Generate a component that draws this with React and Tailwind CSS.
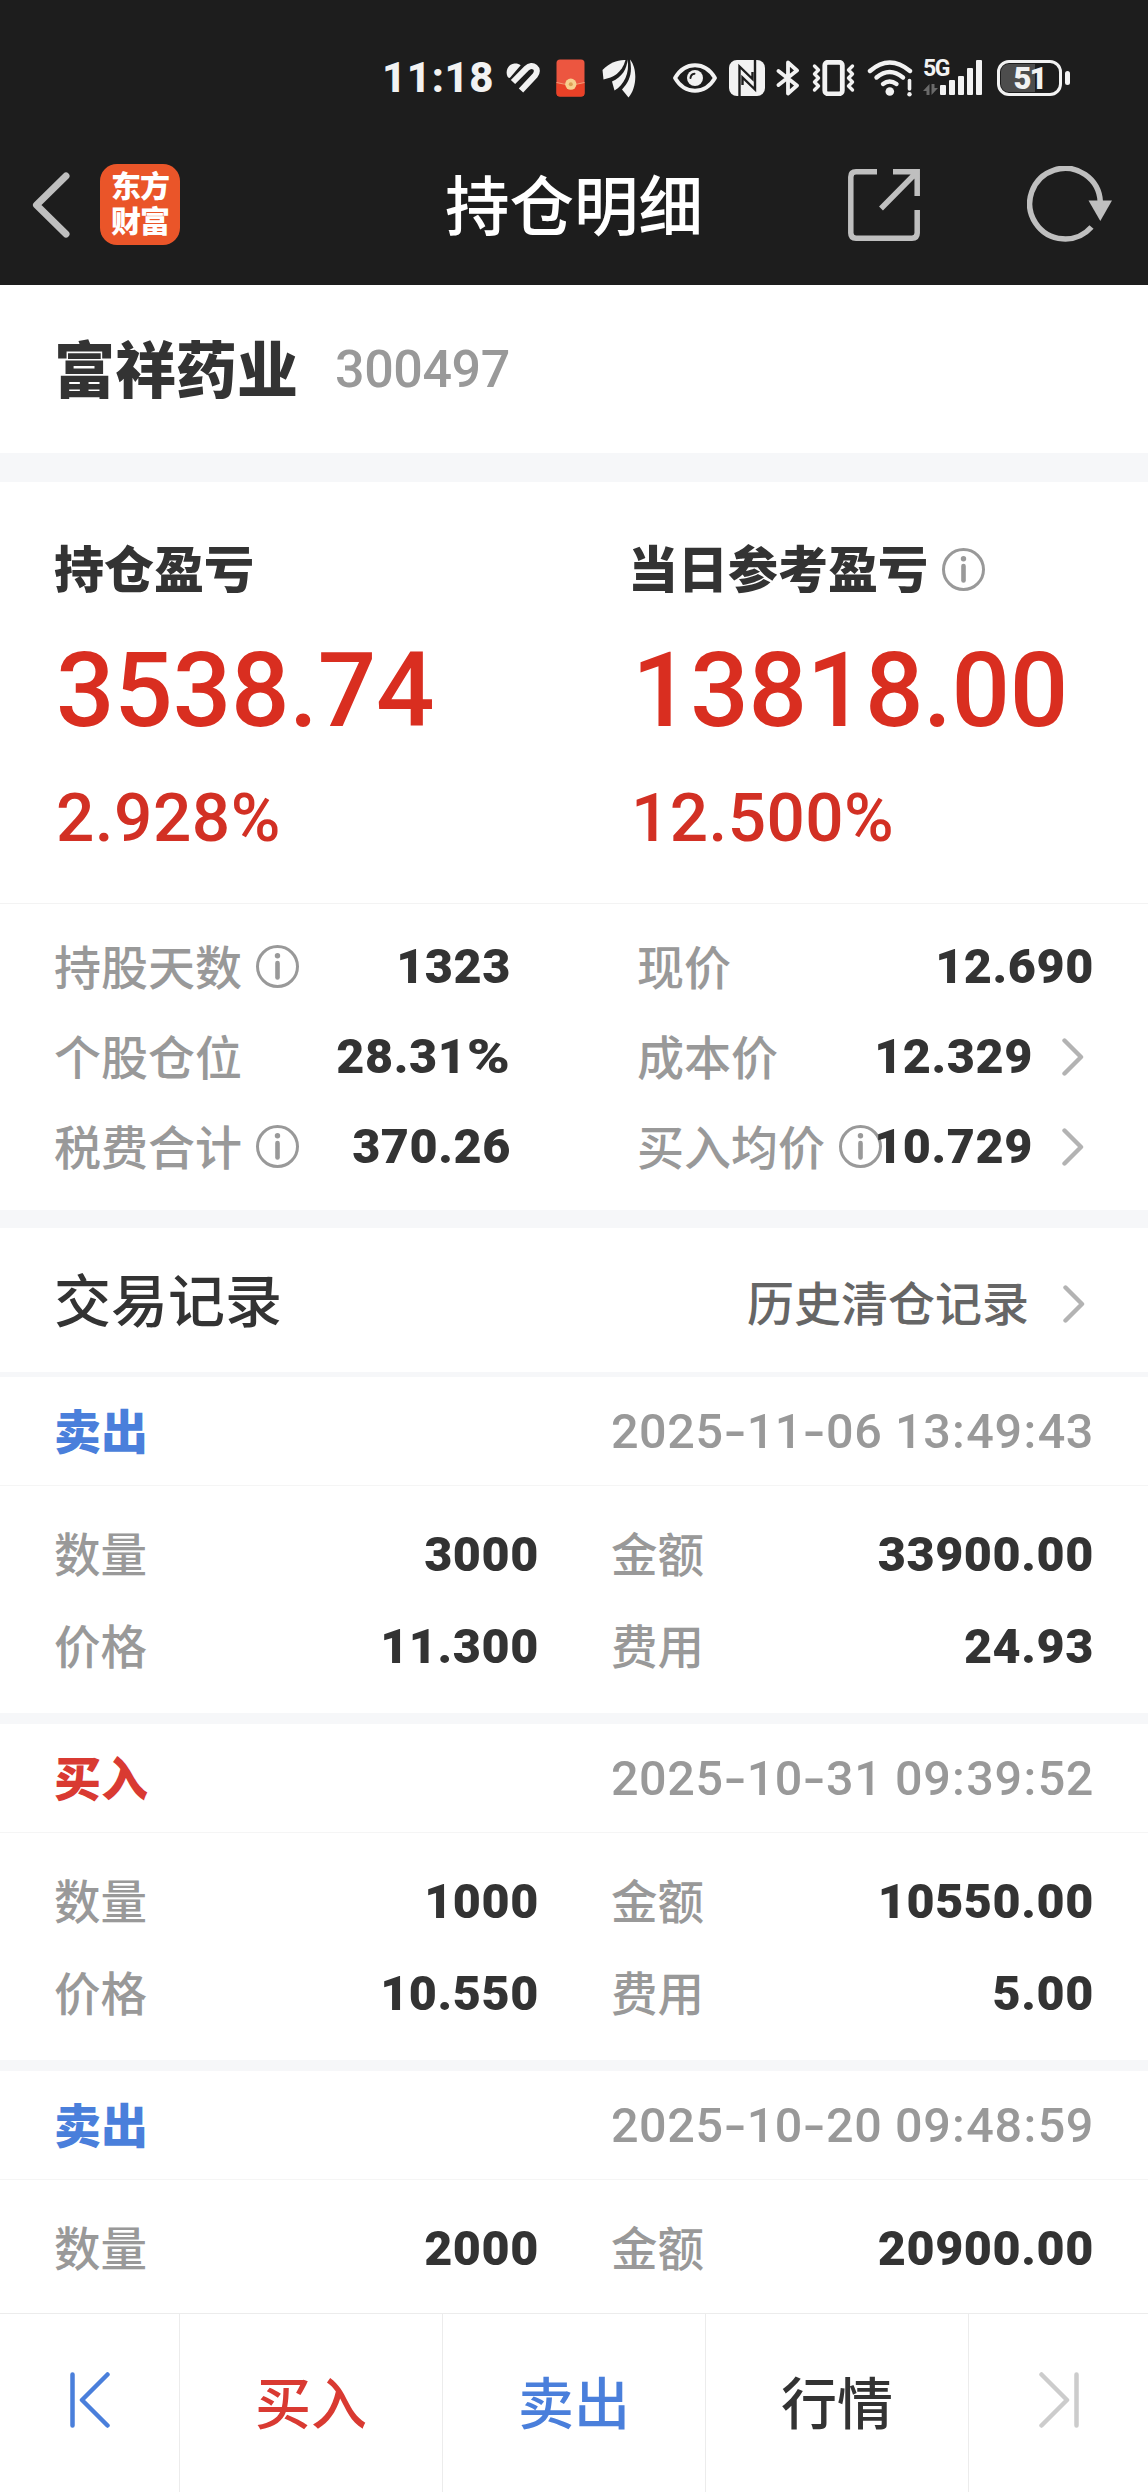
const CJK = "font-['Noto_Sans_CJK_SC',sans-serif]"
const NUM = "font-['Roboto','Noto_Sans_CJK_SC',sans-serif]"

const STATS = [
  [
    { label: '持股天数', value: '1323', info: true },
    { label: '个股仓位', value: '28.31', unit: '%' },
    { label: '税费合计', value: '370.26', info: true },
  ],
  [
    { label: '现价', value: '12.690' },
    { label: '成本价', value: '12.329', link: true },
    { label: '买入均价', value: '10.729', info: true, link: true },
  ],
]

const RECORDS = [
  { side: '卖出', date: '2025-11-06', time: '13:49:43', qty: '3000', amount: '33900.00', price: '11.300', fee: '24.93' },
  { side: '买入', date: '2025-10-31', time: '09:39:52', qty: '1000', amount: '10550.00', price: '10.550', fee: '5.00' },
  { side: '卖出', date: '2025-10-20', time: '09:48:59', qty: '2000', amount: '20900.00' },
]

const SIDE_COLORS = {
  '卖出': 'text-[#4a7fdb]',
  '买入': 'text-[#d93a32]',
}

function InfoIcon({ className }) {
  return (
    <svg className={`h-[43px] w-[43px] shrink-0 ${className}`} viewBox="0 0 43 43" fill="none" stroke="#999" strokeLinecap="round">
      <circle cx="21.5" cy="21.5" r="20" strokeWidth="3" />
      <path d="M21.5 18v14.5" strokeWidth="4.6" />
      <circle cx="21.5" cy="10.8" r="2.7" fill="#999" stroke="none" />
    </svg>
  )
}

function ChevronIcon({ className }) {
  return (
    <svg className={`h-[38px] w-[22px] shrink-0 ${className}`} viewBox="0 0 22 38" fill="none" stroke="#b3b3b3" strokeWidth="4.4" strokeLinecap="round" strokeLinejoin="round">
      <path d="M2.5 2.5 19 19 2.5 35.5" />
    </svg>
  )
}

function StatusBar() {
  return (
    <div className={`flex h-[156px] items-center pl-[382px] text-[#f2f2f2] ${NUM}`}>
      <span className="w-[124px] text-[42px] leading-none font-extrabold tracking-[.6px]">11:18</span>
      {/* 健康 */}
      <svg className="h-[30px] w-[34px]" viewBox="0 0 34 30" fill="#f2f2f2">
        <path d="M1.5 13.5C-1 8 2 1 8.5 .5 11 .3 13 1 14.7 2.2L4.2 14.5C3.4 15.5 2.1 14.8 1.5 13.5Z" />
        <path d="M7 19 20.5 5.3C26.5-.5 34.5 6 29 12.5L15 27.5" fill="none" stroke="#f2f2f2" strokeWidth="6" />
      </svg>
      {/* 红包 */}
      <svg className="ml-4 h-[38px] w-[29px]" viewBox="0 0 29 38">
        <rect x=".5" y=".5" width="28" height="37" rx="3.5" fill="#ec5640" />
        <path d="M.5 23.5Q14.5 27 28.5 23.5V34q0 3.5-3.5 3.5H4Q.5 37.5.5 34Z" fill="#ea4127" />
        <path d="M.5 23.5Q14.5 27.5 28.5 23.5" fill="none" stroke="#f3a07c" strokeWidth="1" />
        <circle cx="14.8" cy="25.2" r="5.6" fill="#f7cf8e" />
        <circle cx="14.8" cy="25.2" r="2" fill="#dc9f55" />
      </svg>
      {/* 羽毛 */}
      <svg className="ml-[17px] h-[39px] w-[34px]" viewBox="0 0 34 39" fill="#f2f2f2">
        <path d="M23.5 1C16 .5 7 4 .5 11L1.5 20.5C11 18.5 20 14 23.5 1Z" />
        <path d="M25.5 .5C25 10 20 18 10 22.5L12.5 31.5C22 26 28 14 25.5 .5Z" />
        <path d="M28 .5C30.5 14 28 22 20 30.5L26.5 38.5C34.5 30 36 10 28 .5Z" />
      </svg>
      {/* 护眼 */}
      <svg className="ml-[37px] h-[30px] w-[44px]" viewBox="0 0 44 30">
        <path d="M2 15C12-2 32-2 42 15 32 32 12 32 2 15Z" fill="none" stroke="#f2f2f2" strokeWidth="3.8" strokeLinejoin="round" />
        <circle cx="22" cy="15" r="8" fill="#f2f2f2" />
        <path d="M17.5 15q.3-3.8 4-4.3" fill="none" stroke="#1d1d1d" strokeWidth="2" strokeLinecap="round" />
      </svg>
      {/* NFC */}
      <svg className="ml-3 h-[36px] w-[36px]" viewBox="0 0 36 36">
        <rect width="36" height="36" rx="8" fill="#f2f2f2" />
        <path d="M10.5 36V6.5L23.5 19V12" fill="none" stroke="#1d1d1d" strokeWidth="2.4" />
        <path d="M26 0V29.5L13.5 17.5V25" fill="none" stroke="#1d1d1d" strokeWidth="2.4" />
      </svg>
      {/* 蓝牙 */}
      <svg className="ml-[11px] h-[36px] w-[24px]" viewBox="0 0 24 36" fill="none" stroke="#f2f2f2" strokeWidth="3.8" strokeLinejoin="round" strokeLinecap="round">
        <path d="M2.5 11 21 25.5 12 33.5V2.5L21 10.5 2.5 25" />
      </svg>
      {/* 振动 */}
      <svg className="ml-3 h-[36px] w-[43px]" viewBox="0 0 43 36" fill="none" stroke="#f2f2f2" strokeWidth="3.4" strokeLinecap="round" strokeLinejoin="round">
        <rect x="12.8" y="2.3" width="17.5" height="31.5" rx="3" strokeWidth="4.8" />
        <path d="M2.5 6 6.5 10 2.5 14 6.5 18 2.5 22 6.5 26 2.5 30" />
        <path d="M40.5 6 36.5 10 40.5 14 36.5 18 40.5 22 36.5 26 40.5 30" />
      </svg>
      {/* WiFi */}
      <svg className="ml-3 h-[37px] w-[46px]" viewBox="0 0 46 37" fill="none" stroke="#f2f2f2" strokeWidth="4.4" strokeLinecap="round">
        <path d="M3 11Q22.5-6 43 11" />
        <path d="M9.5 17.5Q22.5 6.5 36 17.5" />
        <path d="M16 24Q22.5 19 29.5 24" />
        <circle cx="22.8" cy="31.5" r="4.3" fill="#f2f2f2" stroke="none" />
        <path d="M42.5 20.5v8.5" strokeWidth="3.6" />
        <circle cx="42.5" cy="34.3" r="2.2" fill="#f2f2f2" stroke="none" />
      </svg>
      {/* 5G 信号 */}
      <div className="ml-[10px] flex h-[36px] items-end">
        <div className="flex h-[36px] w-[17px] flex-col justify-between">
          <span className="w-6 text-[23px] leading-[17px] font-bold tracking-[-1.5px]">5G</span>
          <svg className="mb-px h-[11px] w-[15px]" viewBox="0 0 15 11" fill="#6a6a6a">
            <path d="M6.5 0V11H3.5V7H0Z" />
            <path d="M8.5 11V0H11.5V4H15Z" />
          </svg>
        </div>
        <div className="flex items-end gap-[3px] pb-px">
          <i className="h-[10px] w-[6px] rounded-[1px] bg-[#f2f2f2]" />
          <i className="h-[15px] w-[6px] rounded-[1px] bg-[#f2f2f2]" />
          <i className="h-[19px] w-[6px] rounded-[1px] bg-[#f2f2f2]" />
          <i className="h-[27px] w-[6px] rounded-[1px] bg-[#f2f2f2]" />
          <i className="h-[35px] w-[6px] rounded-[1px] bg-[#f2f2f2]" />
        </div>
      </div>
      {/* 电量 */}
      <div className="ml-[15px] h-[36px] w-[65px] rounded-[12px] border-3 border-[#f2f2f2] p-px">
        <div className="flex h-full w-full items-center justify-center rounded-[8px] bg-linear-to-r from-[#4d4d4d] from-60% to-transparent to-60% text-[31px] leading-none font-black tracking-[-2px]">
          51
        </div>
      </div>
      <i className="ml-[3px] h-[14px] w-[5px] rounded-full bg-[#f2f2f2]" />
    </div>
  )
}

function TitleBar() {
  return (
    <div className="flex h-[97px] items-center pl-8">
      <svg className="h-[66px] w-[38px]" viewBox="0 0 38 66" fill="none" stroke="#bfbfbf" strokeWidth="7" strokeLinecap="round" strokeLinejoin="round">
        <path d="M34 4 4.5 33 34 62" />
      </svg>
      <div className={`ml-[30px] flex h-[81px] w-[80px] flex-col items-center justify-center rounded-[17px] bg-[#ea5529] pb-[6px] text-[30px] leading-[35px] font-black tracking-[-1px] text-white ${CJK}`}>
        <p>东方<br />财富</p>
      </div>
      <h1 className={`-mt-[5px] ml-[265px] w-[403px] text-[64.5px] leading-none font-medium text-white ${CJK}`}>持仓明细</h1>
      <svg className="h-[72px] w-[72px]" viewBox="0 0 72 72" fill="none" stroke="#bfbfbf" strokeWidth="5.5">
        <path d="M29 2.8H8Q2.8 2.8 2.8 8V64Q2.8 69.2 8 69.2H64Q69.2 69.2 69.2 64V41" />
        <path d="M45 2.8H69.2V27M68 4 33 39.5" />
      </svg>
      <svg className="ml-[107px] h-[77px] w-[86px]" viewBox="0 0 86 77" fill="none">
        <path d="M64.5 61A35.3 35.3 0 1 1 73.3 36" stroke="#bfbfbf" strokeWidth="5.5" />
        <path d="M61.5 34.5H85L73.3 55Z" fill="#bfbfbf" />
      </svg>
    </div>
  )
}

function StatRow({ label, value, unit, info, link }) {
  return (
    <div className="flex h-[90px] items-center">
      <div className="flex min-w-0 flex-1 items-center">
        <span className={`-mt-[5px] shrink-0 text-[47px] leading-none font-medium text-[#999] ${CJK}`}>{label}</span>
        {info && <InfoIcon className="-mt-px ml-[14px]" />}
      </div>
      <span className={`relative mt-px text-[48.5px] leading-none font-black tracking-[.6px] text-[#333] ${NUM}`}>
        {value}
        {unit && <span className="ml-[8px] inline-block origin-right scale-x-120">{unit}</span>}
      </span>
      {link && <ChevronIcon className="mr-[10px] ml-[29px]" />}
    </div>
  )
}

function Field({ label, value }) {
  return (
    <div className="flex h-[92px] items-center justify-between">
      <span className={`-mt-[5px] text-[46.5px] leading-none font-medium text-[#999] ${CJK}`}>{label}</span>
      <span className={`-mr-[2px] mt-px text-[48.5px] leading-none font-black tracking-[.6px] text-[#333] ${NUM}`}>{value}</span>
    </div>
  )
}

function RecordCard({ record }) {
  return (
    <div className="h-[347px] shrink-0 border-b-[11px] border-[#f6f7f9]">
      <div className="flex h-[109px] items-center justify-between border-b border-[#f5f5f5] pr-[54px] pl-[54px]">
        <span className={`-mt-[6px] text-[47px] leading-none font-black ${CJK} ${SIDE_COLORS[record.side]}`}>{record.side}</span>
        <span className={`mt-[2px] text-[48.5px] leading-none font-medium tracking-[.6px] text-[#999] ${NUM}`}>
          {record.date.split('-').map((part, i) => (
            <span key={i}>{i > 0 && <span className="inline-block w-[23px] scale-x-135 text-center">-</span>}{part}</span>
          ))}
          {' '}
          {record.time.split(':').map((part, i) => (
            <span key={i}>{i > 0 && <span className="inline-block w-[15px] text-center">:</span>}{part}</span>
          ))}
        </span>
      </div>
      <div className="grid grid-cols-[483px_481px] gap-x-[74px] pt-[23px] pl-[54px]">
        <Field label="数量" value={record.qty} />
        <Field label="金额" value={record.amount} />
        {record.price && <Field label="价格" value={record.price} />}
        {record.fee && <Field label="费用" value={record.fee} />}
      </div>
    </div>
  )
}

export default function App() {
  return (
    <div className="flex h-[2492px] w-[1148px] flex-col overflow-hidden bg-white">
      <header className="h-[285px] shrink-0 bg-[#1d1d1d]">
        <StatusBar />
        <TitleBar />
      </header>

      <div className="flex h-[168px] shrink-0 items-center pl-[54px]">
        <h2 className={`-mt-[5px] w-[281px] text-[61px] leading-none font-black text-[#333] ${CJK}`}>富祥药业</h2>
        <span className={`mt-[2px] text-[52px] leading-none font-medium tracking-[-.4px] text-[#999] ${NUM}`}>300497</span>
      </div>

      <div className="h-[29px] shrink-0 bg-[#f6f7f9]" />

      {/* 盈亏 */}
      <div className="grid h-[421px] shrink-0 grid-cols-[576px_1fr] pt-[60px] pl-[54px]">
        <div>
          <div className="flex h-[56px] items-center">
            <span className={`-mt-[8px] text-[50px] leading-none font-black text-[#333] ${CJK}`}>持仓盈亏</span>
          </div>
          <div className={`mt-[41px] pl-[2px] text-[103px] leading-none font-medium tracking-[-.2px] text-[#d92e20] ${NUM}`}>3538.74</div>
          <div className={`mt-[42px] pl-[2px] text-[67.5px] leading-none font-medium tracking-[.5px] text-[#d23024] ${NUM}`}>2.928%</div>
        </div>
        <div className="-ml-[2px]">
          <div className="flex h-[56px] items-center">
            <span className={`-mt-[8px] text-[50px] leading-none font-black text-[#333] ${CJK}`}>当日参考盈亏</span>
            <InfoIcon className="-mt-[2px] ml-[14px]" />
          </div>
          <div className={`mt-[41px] pl-[4px] text-[103px] leading-none font-medium tracking-[-.3px] text-[#d92e20] ${NUM}`}>13818.00</div>
          <div className={`mt-[42px] pl-[3px] text-[67.5px] leading-none font-medium tracking-[.4px] text-[#d23024] ${NUM}`}>12.500%</div>
        </div>
      </div>

      <div className="grid h-[307px] shrink-0 grid-cols-[457px_457px] gap-x-[126px] border-t border-[#f3f3f3] pt-[18px] pl-[54px]">
        {STATS.map((col, i) => (
          <div key={i}>
            {col.map(s => <StatRow key={s.label} {...s} />)}
          </div>
        ))}
      </div>

      <div className="h-[18px] shrink-0 bg-[#f6f7f9]" />

      {/* 交易记录 */}
      <div className="flex h-[149px] shrink-0 items-center border-b-[5px] border-[#f6f7f9] pr-[63px] pl-[54px]">
        <h3 className={`-mt-[5px] text-[57px] leading-none font-medium text-[#333] ${CJK}`}>交易记录</h3>
        <span className={`ml-auto text-[47px] leading-none font-medium text-[#666] ${CJK}`}>历史清仓记录</span>
        <ChevronIcon className="mt-2 ml-[34px]" />
      </div>

      <div className="flex min-h-0 flex-1 flex-col overflow-hidden">
        {RECORDS.map(r => <RecordCard key={r.date} record={r} />)}
      </div>

      {/* 底部操作栏 */}
      <nav className={`grid h-[179px] shrink-0 grid-cols-[180px_263px_263px_263px_179px] divide-x divide-[#ececec] border-t border-[#ececec] bg-white text-[56px] leading-none font-medium ${CJK}`}>
        <button className="flex items-center justify-center pb-[6px]">
          <svg className="h-[56px] w-[40px]" viewBox="0 0 40 56" fill="none" stroke="#4a7fdb" strokeWidth="4.5" strokeLinecap="round" strokeLinejoin="round">
            <path d="M2.5 2.5v51M37.5 2.5 12 28 37.5 53.5" />
          </svg>
        </button>
        <button className="flex items-center justify-center pb-[6px] text-[#d93a32]">买入</button>
        <button className="flex items-center justify-center pb-[6px] text-[#4a7fdb]">卖出</button>
        <button className="flex items-center justify-center pb-[6px] text-[#333]">行情</button>
        <button className="flex items-center justify-center pb-[6px]">
          <svg className="h-[56px] w-[40px]" viewBox="0 0 40 56" fill="none" stroke="#ccc" strokeWidth="4.5" strokeLinecap="round" strokeLinejoin="round">
            <path d="M37.5 2.5v51M2.5 2.5 28 28 2.5 53.5" />
          </svg>
        </button>
      </nav>
    </div>
  )
}
